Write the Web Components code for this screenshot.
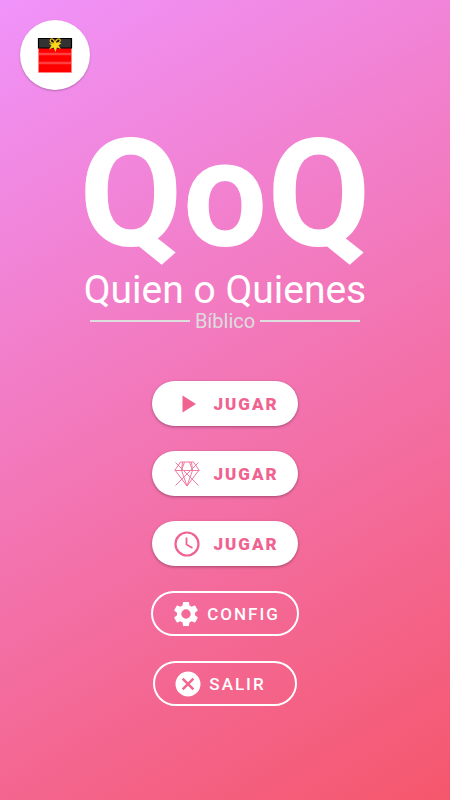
<!DOCTYPE html>
<html lang="es">
<head>
<meta charset="utf-8">
<meta name="viewport" content="width=device-width, initial-scale=1">
<title>QoQ - Quien o Quienes Bíblico</title>
<style>
html, body { margin: 0; min-height: 100%; }
body { font-family: Roboto, "Liberation Sans", sans-serif; color: #fff; }
</style>
</head>
<body>
<qoq-home>
  <gift-button slot="corner"></gift-button>
  <game-title slot="title" subtitle="Quien o Quienes" tag="Bíblico">QoQ</game-title>
  <menu-button icon="play">JUGAR</menu-button>
  <menu-button icon="diamond">JUGAR</menu-button>
  <menu-button icon="clock">JUGAR</menu-button>
  <menu-button icon="gear" outlined>CONFIG</menu-button>
  <menu-button icon="close" outlined class="exit">SALIR</menu-button>
</qoq-home>
<script>
class QoqHome extends HTMLElement {
  constructor() {
    super();
    this.attachShadow({ mode: 'open' }).innerHTML = `
      <style>
        :host { display: flex; flex-direction: column; box-sizing: border-box; min-height: 100vh;
          padding: 20px; background: linear-gradient(150deg, #f093fb 0%, #f5576c 100%); }
        header { display: flex; }
        nav { display: flex; flex-direction: column; align-items: center; gap: 25px; margin-top: 49px; }
      </style>
      <header><slot name="corner"></slot></header>
      <main>
        <slot name="title"></slot>
        <nav><slot></slot></nav>
      </main>`;
  }
}

class GiftButton extends HTMLElement {
  constructor() {
    super();
    this.attachShadow({ mode: 'open' }).innerHTML = `
      <style>
        :host { display: block; }
        button { display: grid; place-items: center; width: 70px; height: 70px; padding: 0; border: 0;
          border-radius: 50%; background: #fff; box-shadow: 0 1px 2px rgba(0,0,0,.25); cursor: pointer; }
        svg { display: block; }
      </style>
      <button type="button" aria-label="Regalo">
        <svg width="36" height="36" viewBox="0 0 36 36">
          <path d="M1.500 10h33v25.500h-33z" fill="#fe0000"/>
          <path d="M2 17h32M2 26h32" stroke="#ff4040" stroke-width="2.500"/>
          <path d="M1.500 11v24.500h33V11" fill="none" stroke="#ff8a8a" stroke-width=".6"/>
          <path d="M1.500 1.500h33v9.500h-33z" fill="#333" stroke="#000" stroke-width="1.200"/>
          <path d="M17.500 6C14 6.500 12.500 4 13.500 2.500S17 2.500 18 5.500C19 2.500 22 1 23 2.500S22 6.500 18.500 6" fill="#111" stroke="#eebc13" stroke-width="1.300"/>
          <path d="M18 4l1.500 2 5 0-3 2.500 2.500 3.500-4-1.500-1.500 4.500-2-4.500-4.500 2 2.500-4-2.500-2 4.500 0z" fill="#fad61c"/>
        </svg>
      </button>`;
  }
}

class GameTitle extends HTMLElement {
  constructor() {
    super();
    this.attachShadow({ mode: 'open' }).innerHTML = `
      <style>
        :host { display: flex; flex-direction: column; align-items: center; white-space: nowrap; margin-top: 30px; }
        h1 { margin: 0; font-size: 150px; line-height: 150px; font-weight: 700; }
        h2 { margin: 0; font-size: 39px; line-height: 40px; font-weight: 400; }
        .tag { display: grid; grid-template-columns: 100px auto 100px; align-items: center; gap: 5px;
          margin: 0; font-size: 20px; line-height: 22px; color: #ddd; }
        .tag::before, .tag::after { content: ""; height: 2px; background: #ddd; }
      </style>
      <h1><slot></slot></h1>
      <h2></h2>
      <p class="tag"><span></span></p>`;
    this.shadowRoot.querySelector('h2').textContent = this.getAttribute('subtitle');
    this.shadowRoot.querySelector('span').textContent = this.getAttribute('tag');
  }
}

const ICONS = {
  play: '<path d="M8.500 4.500v17l13.500-8.500z" fill="currentColor"/>',
  diamond: `<g fill="none" stroke="currentColor" stroke-width="1" opacity=".85">
      <path d="M6.500 1h13l5.500 8L13 25 1 9zM.5 9.500h25M8.500 1L7.500 9.500 13 25l5.500-15.500-1-8.500"/>
      <path d="M1.500 1.500l23 23M24.500 1.500l-23 23M10.500 1L7.500 9.500M15.500 1l3 8.500"/></g>`,
  clock: `<g fill="none" stroke="currentColor"><circle cx="13" cy="13" r="11.500" stroke-width="2.200"/>
      <path d="M12.500 6.500v7l6 3.500" stroke-width="1.800"/></g>`,
  gear: `<path transform="translate(-1.500 -1.500) scale(1.208)" fill="currentColor" d="M19.430 12.980c.04-.32.07-.64.07-.98s-.03-.66-.07-.98l2.110-1.650c.19-.15.24-.42.12-.64l-2-3.460c-.12-.22-.39-.3-.61-.22l-2.490 1c-.52-.4-1.080-.73-1.690-.98l-.38-2.650C14.460 2.180 14.250 2 14 2h-4c-.25 0-.46.18-.49.42l-.38 2.650c-.61.25-1.170.59-1.690.98l-2.490-1c-.23-.09-.49 0-.61.22l-2 3.460c-.13.22-.07.49.12.64l2.110 1.650c-.04.32-.07.65-.07.98s.03.66.07.98l-2.110 1.650c-.19.15-.24.42-.12.64l2 3.460c.12.22.39.3.61.22l2.490-1c.52.4 1.080.73 1.690.98l.38 2.650c.03.24.24.42.49.42h4c.25 0 .46-.18.49-.42l.38-2.650c.61-.25 1.170-.59 1.690-.98l2.490 1c.23.09.49 0 .61-.22l2-3.460c.12-.22.07-.49-.12-.64l-2.110-1.650zM12 15.900a3.900 3.900 0 1 1 0-7.800 3.900 3.900 0 0 1 0 7.800z"/>`,
  close: `<path fill="currentColor" fill-rule="evenodd" d="M13 .5a12.500 12.500 0 1 0 0 25 12.500 12.500 0 0 0 0-25zM19.300 17.500l-1.800 1.800-4.500-4.500-4.500 4.500-1.800-1.800 4.500-4.500-4.500-4.500 1.800-1.800 4.500 4.500 4.500-4.500 1.800 1.800-4.500 4.500z"/>`
};

class MenuButton extends HTMLElement {
  constructor() {
    super();
    this.attachShadow({ mode: 'open' }).innerHTML = `
      <style>
        :host { display: block; }
        button { display: flex; align-items: center; gap: 13px; box-sizing: border-box; height: 45px;
          padding: 0 19px 0 22px; border: 0; border-radius: 23px; background: #fff; color: #f0628f;
          box-shadow: 0 1px 3px rgba(0,0,0,.35); font: 900 17px/22px Roboto, "Liberation Sans", sans-serif;
          letter-spacing: 2px; cursor: pointer; }
        svg { flex: none; display: block; }
        :host([outlined]) button { gap: 8px; padding: 0 17px 0 20px; border: 2px solid #fff;
          background: transparent; color: #fff; box-shadow: none; font-weight: 500; }
        :host(.exit) button { padding-right: 29px; }
      </style>
      <button type="button">
        <svg width="26" height="26" viewBox="0 0 26 26" aria-hidden="true">${ICONS[this.getAttribute('icon')]}</svg>
        <span><slot></slot></span>
      </button>`;
  }
}

customElements.define('qoq-home', QoqHome);
customElements.define('gift-button', GiftButton);
customElements.define('game-title', GameTitle);
customElements.define('menu-button', MenuButton);
</script>
</body>
</html>
